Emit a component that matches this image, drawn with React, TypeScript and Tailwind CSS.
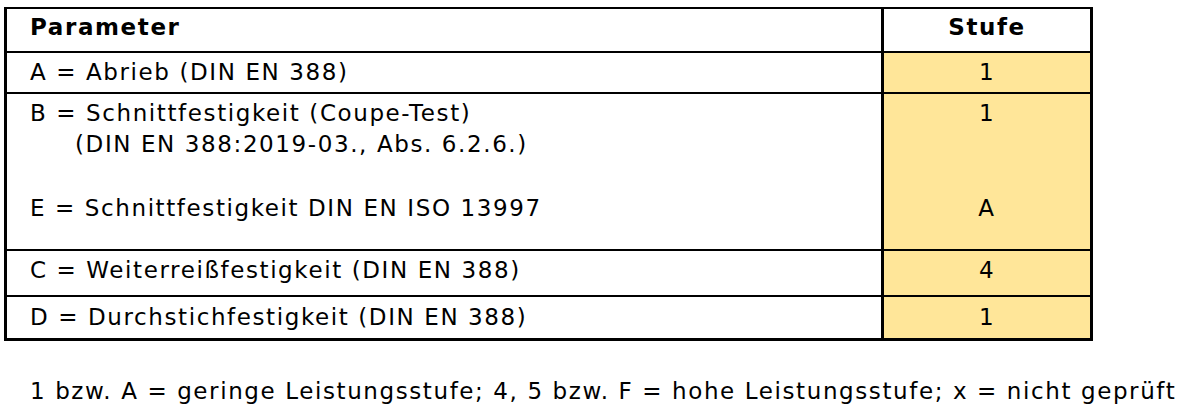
const rows = [
  { label: "A = Abrieb (DIN EN 388)", value: "1", height: "h-[41px]" },
];

export default function App() {
  return (
    <div
      className="w-[1180px] h-[408px] bg-white text-black text-[23px] leading-[30px] tracking-[1.6px]"
      style={{ fontFamily: '"DejaVu Sans", Verdana, sans-serif' }}
    >
      <div className="pl-[4px] pt-[7px]">
        <div className="w-[1089px] border-x-[3px] border-t-2 border-b-[3px] border-black">
          {/* Header */}
          <div className="flex h-[42px]">
            <div className="flex-1 pl-[23px] pt-[3px] font-bold">Parameter</div>
            <div className="w-[209px] border-l-[3px] border-black pt-[3px] text-center font-bold">
              Stufe
            </div>
          </div>

          {rows.map((r) => (
            <div key={r.label} className={`flex border-t-2 border-black ${r.height}`}>
              <div className="flex-1 pl-[23px] pt-[4px]">{r.label}</div>
              <div className="w-[209px] border-l-[3px] border-black bg-[#ffe699] pt-[4px] text-center">
                {r.value}
              </div>
            </div>
          ))}

          {/* B / E merged row */}
          <div className="flex h-[157px] border-t-2 border-black">
            <div className="flex-1 pl-[23px] pt-[4px]">
              <div>B = Schnittfestigkeit (Coupe-Test)</div>
              <div className="pl-[45px] mt-[1px]">(DIN EN 388:2019-03., Abs. 6.2.6.)</div>
              <div className="mt-[34px]">E = Schnittfestigkeit DIN EN ISO 13997</div>
            </div>
            <div className="w-[209px] border-l-[3px] border-black bg-[#ffe699] pt-[4px] text-center">
              <div>1</div>
              <div className="mt-[65px]">A</div>
            </div>
          </div>

          <div className="flex h-[46px] border-t-2 border-black">
            <div className="flex-1 pl-[23px] pt-[4px]">C = Weiterreißfestigkeit (DIN EN 388)</div>
            <div className="w-[209px] border-l-[3px] border-black bg-[#ffe699] pt-[4px] text-center">4</div>
          </div>

          <div className="flex h-[43px] border-t-2 border-black">
            <div className="flex-1 pl-[23px] pt-[5px]">D = Durchstichfestigkeit (DIN EN 388)</div>
            <div className="w-[209px] border-l-[3px] border-black bg-[#ffe699] pt-[5px] text-center">1</div>
          </div>
        </div>
      </div>

      <p className="mt-[35px] pl-[30px] whitespace-nowrap">
        1 bzw. A = geringe Leistungsstufe; 4, 5 bzw. F = hohe Leistungsstufe; x = nicht geprüft
      </p>
    </div>
  );
}
